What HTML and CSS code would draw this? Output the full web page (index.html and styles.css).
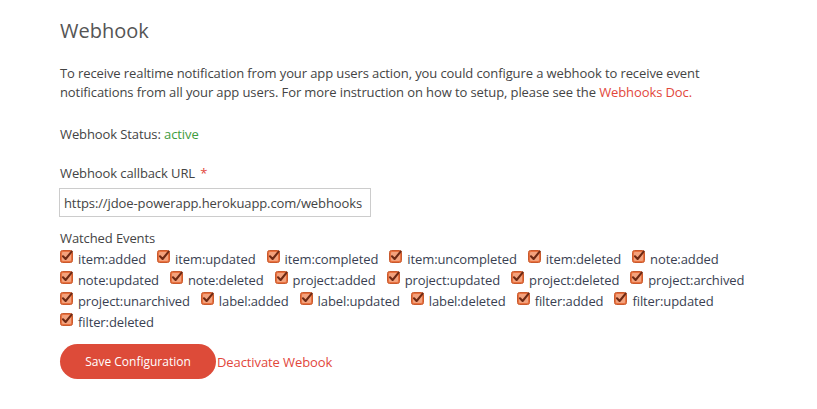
FILE: index.html
```html
<!DOCTYPE html>
<html>
<head>
<meta charset="utf-8">
<link rel="stylesheet" href="styles.css">
</head>
<body>
<div class="page">
  <h2 class="title">Webhook</h2>
  <p class="intro">To receive realtime notification from your app users action, you could configure a webhook to receive event notifications from all your app users. For more instruction on how to setup, please see the <a class="link" href="#">Webhooks Doc.</a></p>
  <div class="status">Webhook Status: <span class="active">active</span></div>
  <label class="field-label">Webhook callback URL <span class="req">*</span></label>
  <input class="url" type="text" value="https://jdoe-powerapp.herokuapp.com/webhooks">
  <div class="events-label">Watched Events</div>
  <div class="events" id="events"></div>
  <div class="actions">
    <button class="save">Save Configuration</button>
    <a class="link deact" href="#">Deactivate Webook</a>
  </div>
</div>
<script src="app.js"></script>
</body>
</html>
```

FILE: app.js
```js
var names = ["item:added","item:updated","item:completed","item:uncompleted","item:deleted","note:added","note:updated","note:deleted","project:added","project:updated","project:deleted","project:archived","project:unarchived","label:added","label:updated","label:deleted","filter:added","filter:updated","filter:deleted"];
var box = '<svg class="cb" width="13" height="13" viewBox="0 0 13 13"><rect x="0.5" y="0.5" width="12" height="12" rx="2" fill="#e8713f" stroke="#c95a2e"/><rect x="2" y="2" width="9" height="9" rx="1" fill="#f3a27d"/><path d="M3 6.3 L5.6 9 L11.6 1.6" fill="none" stroke="#6e2a14" stroke-width="2.1" stroke-linecap="round" stroke-linejoin="round"/></svg>';
var html = "";
names.forEach(function (n) {
  html += '<span class="ev">' + box + '<span class="ev-text">' + n + '</span></span>';
});
document.getElementById("events").innerHTML = html;
```

FILE: styles.css
```css
body {
  margin: 0;
  background: #fff;
  font-family: "Open Sans", "Noto Sans", sans-serif;
  font-size: 13px;
  letter-spacing: -0.1px;
  color: #555;
}
.page {
  padding: 17px 0 0 60px;
  width: 720px;
}
.title {
  margin: 0;
  font-size: 20px;
  font-weight: 400;
  letter-spacing: 0;
  color: #555;
  line-height: 28px;
}
.intro {
  margin: 19px 0 0 0;
  max-width: 660px;
  line-height: 19px;
  color: #444;
}
.link {
  color: #e2473b;
  text-decoration: none;
}
.status {
  margin-top: 23px;
  line-height: 18px;
  color: #444;
}
.active {
  color: #3e9c3e;
}
.field-label {
  display: block;
  margin-top: 21px;
  line-height: 18px;
  color: #444;
}
.req {
  color: #e2473b;
  margin-left: 2px;
}
.url {
  display: block;
  margin-top: 6px;
  margin-left: -1px;
  width: 312px;
  height: 29px;
  box-sizing: border-box;
  border: 1px solid #ccc;
  padding: 0 4px;
  font-family: "Open Sans", "Noto Sans", sans-serif;
  font-size: 13px;
  letter-spacing: -0.1px;
  color: #444;
  outline: none;
}
.events-label {
  margin-top: 12px;
  line-height: 18px;
  color: #444;
}
.events {
  display: flex;
  flex-wrap: wrap;
  column-gap: 11px;
  margin-top: 1px;
}
.ev {
  display: inline-flex;
  align-items: center;
  gap: 5px;
  height: 21px;
  color: #3a3f52;
}
.cb {
  display: block;
  margin-top: -4px;
}
.actions {
  display: flex;
  align-items: center;
  margin-top: 12px;
}
.save {
  width: 156px;
  height: 35px;
  border: none;
  border-radius: 18px;
  background: #dd4b39;
  color: #fff;
  font-family: "Open Sans", "Noto Sans", sans-serif;
  font-size: 12px;
  padding: 0;
  cursor: pointer;
}
.deact {
  margin-left: 1px;
  line-height: 18px;
}
```
